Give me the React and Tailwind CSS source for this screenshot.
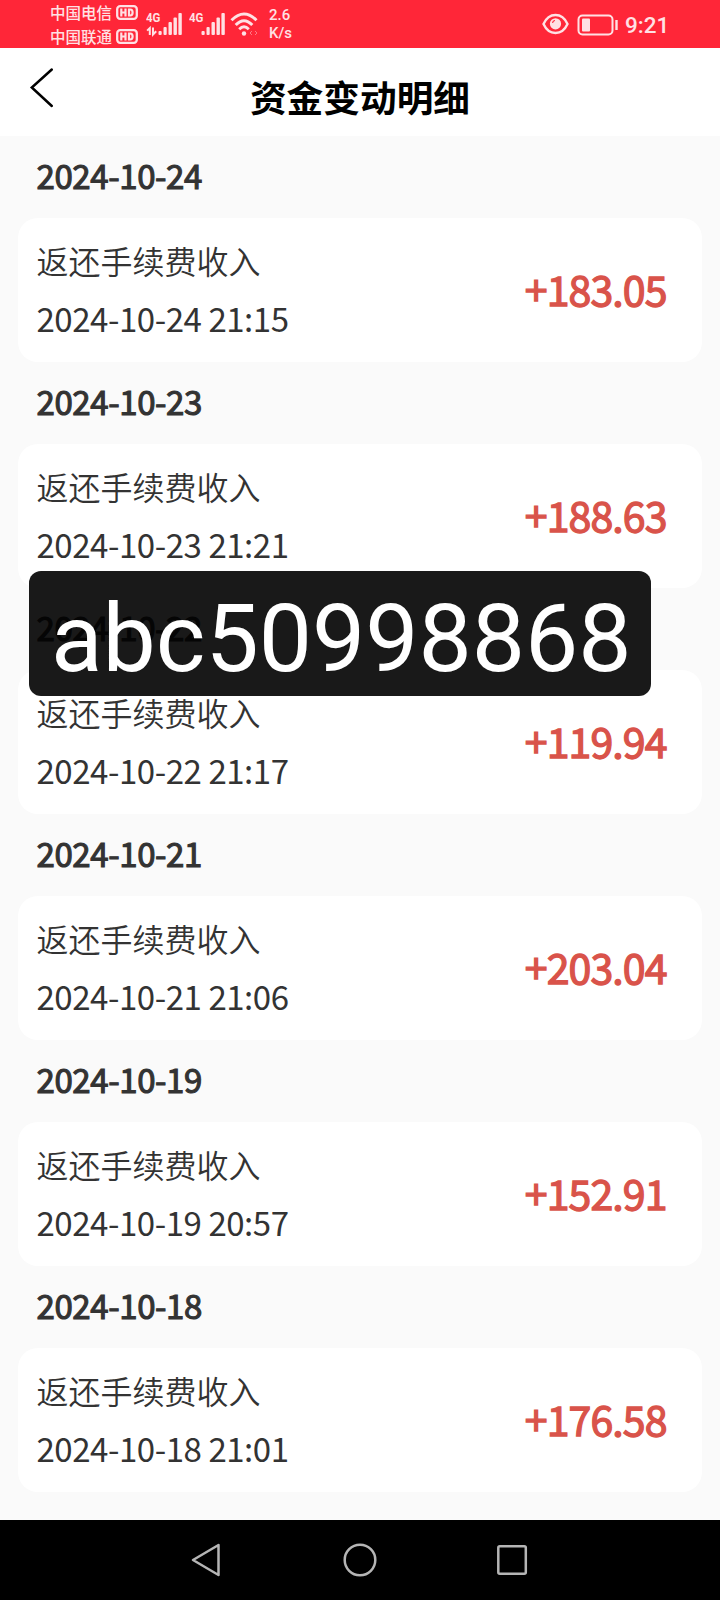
const records = [
  { day: "2024-10-24", time: "21:15", amount: "+183.05" },
  { day: "2024-10-23", time: "21:21", amount: "+188.63" },
  { day: "2024-10-22", time: "21:17", amount: "+119.94" },
  { day: "2024-10-21", time: "21:06", amount: "+203.04" },
  { day: "2024-10-19", time: "20:57", amount: "+152.91" },
  { day: "2024-10-18", time: "21:01", amount: "+176.58" },
];

function Carrier({ name }) {
  return (
    <div className="flex h-6 items-center gap-[4px]">
      <span className="text-[15.5px] font-medium leading-6">{name}</span>
      <svg width="22" height="15" viewBox="0 0 22 15" fill="none" stroke="currentColor">
        <rect x="1.2" y="1.2" width="19.6" height="12.6" rx="3" strokeWidth="2.3" />
        <path d="M5.3 3.5v8M9.5 3.5v8M5.3 7.5h4.2M13 4.5v6h1.2c3.2 0 3.2-6 0-6z" strokeWidth="2.2" />
      </svg>
    </div>
  );
}

function Signal({ data }) {
  return (
    <div className="flex h-[26px] w-[37px] flex-col">
      <span className="h-[11px] origin-left scale-x-[0.85] pt-px font-['Roboto',sans-serif] text-[13.5px] font-bold leading-[11px]">4G</span>
      <svg className="-mt-[11px] shrink-0" width="37" height="26" viewBox="0 0 37 26" fill="currentColor">
        <rect x="12.5" y="20" width="3.2" height="4" rx="1" />
        <rect x="17.5" y="16" width="3.2" height="8" rx="1" />
        <rect x="22.5" y="11" width="3.4" height="13" rx="1" />
        <rect x="27.5" y="6.5" width="3.4" height="17.5" rx="1" />
        <rect x="32.4" y="2" width="3.4" height="22" rx="1" />
        {data && <path d="M3.8 24v-7L1.1 19.6M7 16.5v7l3.2-3.2" fill="none" stroke="currentColor" strokeWidth="2" />}
      </svg>
    </div>
  );
}

function StatusBar() {
  return (
    <div className="flex h-12 items-center bg-[#ff2638] pl-[50px] pr-[51px] text-[#ffe1e4]">
      <div className="flex w-[96px] flex-col font-['Noto_Sans_CJK_SC',sans-serif]">
        <Carrier name="中国电信" />
        <Carrier name="中国联通" />
      </div>
      <div className="flex items-center">
        <Signal data />
        <div className="ml-[6px]"><Signal /></div>
        <svg className="ml-[4px]" width="28" height="26" viewBox="0 0 28 26" fill="none" stroke="currentColor">
          <path d="M1.5 9.2Q14 -3.2 26.500 9.2" strokeWidth="3" />
          <path d="M5.7 14Q14 5.5 22.3 14" strokeWidth="3" />
          <path d="M9.2 18.3Q14 13.2 18.8 18.3" strokeWidth="2.8" />
          <circle cx="14" cy="22.5" r="2.2" fill="currentColor" stroke="none" />
          <path d="M22 20l-2 2 2 2M25 20l2 2-2 2" strokeWidth="1" opacity=".45" />
        </svg>
      </div>
      <div className="ml-[11px] flex flex-col font-['Roboto',sans-serif] text-[15px] font-medium leading-[18px]">
        <span>2.6</span>
        <span>K/s</span>
      </div>
      <div className="ml-auto flex items-center">
        <svg width="27" height="22" viewBox="0 0 27 22" fill="none" stroke="currentColor">
          <path d="M1.5 11C4 5.5 8.5 2 13.5 2S23 5.5 25.5 11C23 16.5 18.5 20 13.5 20S4 16.5 1.5 11z" strokeWidth="2.4" />
          <circle cx="13.5" cy="10.8" r="5.6" fill="currentColor" stroke="none" />
          <path d="M10.5 9.8a3 3 0 0 1 2.5-2.3" stroke="#ff2638" strokeWidth="1.2" />
        </svg>
        <svg className="ml-2 mt-px" width="42" height="22" viewBox="0 0 42 22" fill="none" stroke="currentColor">
          <rect x="1.5" y="1.5" width="34" height="19" rx="4" strokeWidth="2" />
          <rect x="5" y="4.5" width="8" height="13" rx="1" fill="currentColor" stroke="none" />
          <path d="M39.5 6v10" strokeWidth="2.4" />
        </svg>
        <span className="ml-1.5 w-[44px] whitespace-nowrap pt-[4px] font-['Roboto',sans-serif] text-[22.5px] font-medium">9:21</span>
      </div>
    </div>
  );
}

function Header() {
  return (
    <header className="grid h-[88px] grid-cols-[120px_1fr_120px] bg-white">
      <button className="flex items-start pl-[29px] pt-[18px] text-black" aria-label="返回">
        <svg width="26" height="42" viewBox="0 0 26 42" fill="none" stroke="currentColor" strokeWidth="2.5" strokeLinecap="round">
          <path d="M22.8 3.5L2.8 21.5L22.8 40" />
        </svg>
      </button>
      <h1 className="pt-[21px] text-center text-[36.7px] font-bold leading-[54px] text-black">资金变动明细</h1>
    </header>
  );
}

function Record({ day, time, amount }) {
  return (
    <section className="px-[18px]">
      <h2 className="flex h-[82px] items-center pb-[3px] pl-[18.5px] text-[33px] leading-none tracking-[-0.4px] [-webkit-text-stroke:1.1px_#333]">{day}</h2>
      <div className="flex h-36 items-center justify-between rounded-[20px] bg-white pb-[2px] pl-[18.5px] pr-[35px]">
        <div className="flex flex-col text-[32px]">
          <span className="h-[58px] font-[350] leading-[58px]">返还手续费收入</span>
          <span className="h-[58px] text-[33px] leading-[58px] tracking-[-0.45px]">{day} {time}</span>
        </div>
        <span className="pb-[2px] pr-[0.5px] text-[41px] leading-none tracking-[-0.9px] text-[#d9534a] [-webkit-text-stroke:1.3px_#d9534a]">{amount}</span>
      </div>
    </section>
  );
}

function NavBar() {
  return (
    <nav className="flex h-20 items-center bg-black pl-[190px] text-[#b5b5b5]">
      <svg width="32" height="36" viewBox="0 0 32 36" fill="none" stroke="currentColor" strokeWidth="2.5" strokeLinejoin="round">
        <path d="M3 18L28.5 3V33z" />
      </svg>
      <svg className="ml-[120px]" width="36" height="36" viewBox="0 0 36 36" fill="none" stroke="currentColor" strokeWidth="2.5">
        <circle cx="18" cy="18" r="15.3" />
      </svg>
      <svg className="ml-[116px]" width="36" height="36" viewBox="0 0 36 36" fill="none" stroke="currentColor" strokeWidth="2.5">
        <rect x="4.3" y="4.3" width="27.5" height="27.5" rx="1.5" />
      </svg>
    </nav>
  );
}

export default function App() {
  return (
    <div className="relative flex h-[1600px] w-[720px] flex-col overflow-hidden bg-[#fafafa] font-['Noto_Sans_CJK_SC',sans-serif] text-[#333]">
      <StatusBar />
      <Header />
      <main className="flex-1">
        {records.map((record) => (
          <Record key={record.day} {...record} />
        ))}
      </main>
      <NavBar />
      <div className="absolute left-[29px] top-[571px] flex h-[125px] w-[622px] items-center rounded-[12px] bg-black/90 pl-[22px] pt-[11px] font-['Roboto',sans-serif] text-[94.8px] leading-none text-white">
        abc50998868
      </div>
    </div>
  );
}
